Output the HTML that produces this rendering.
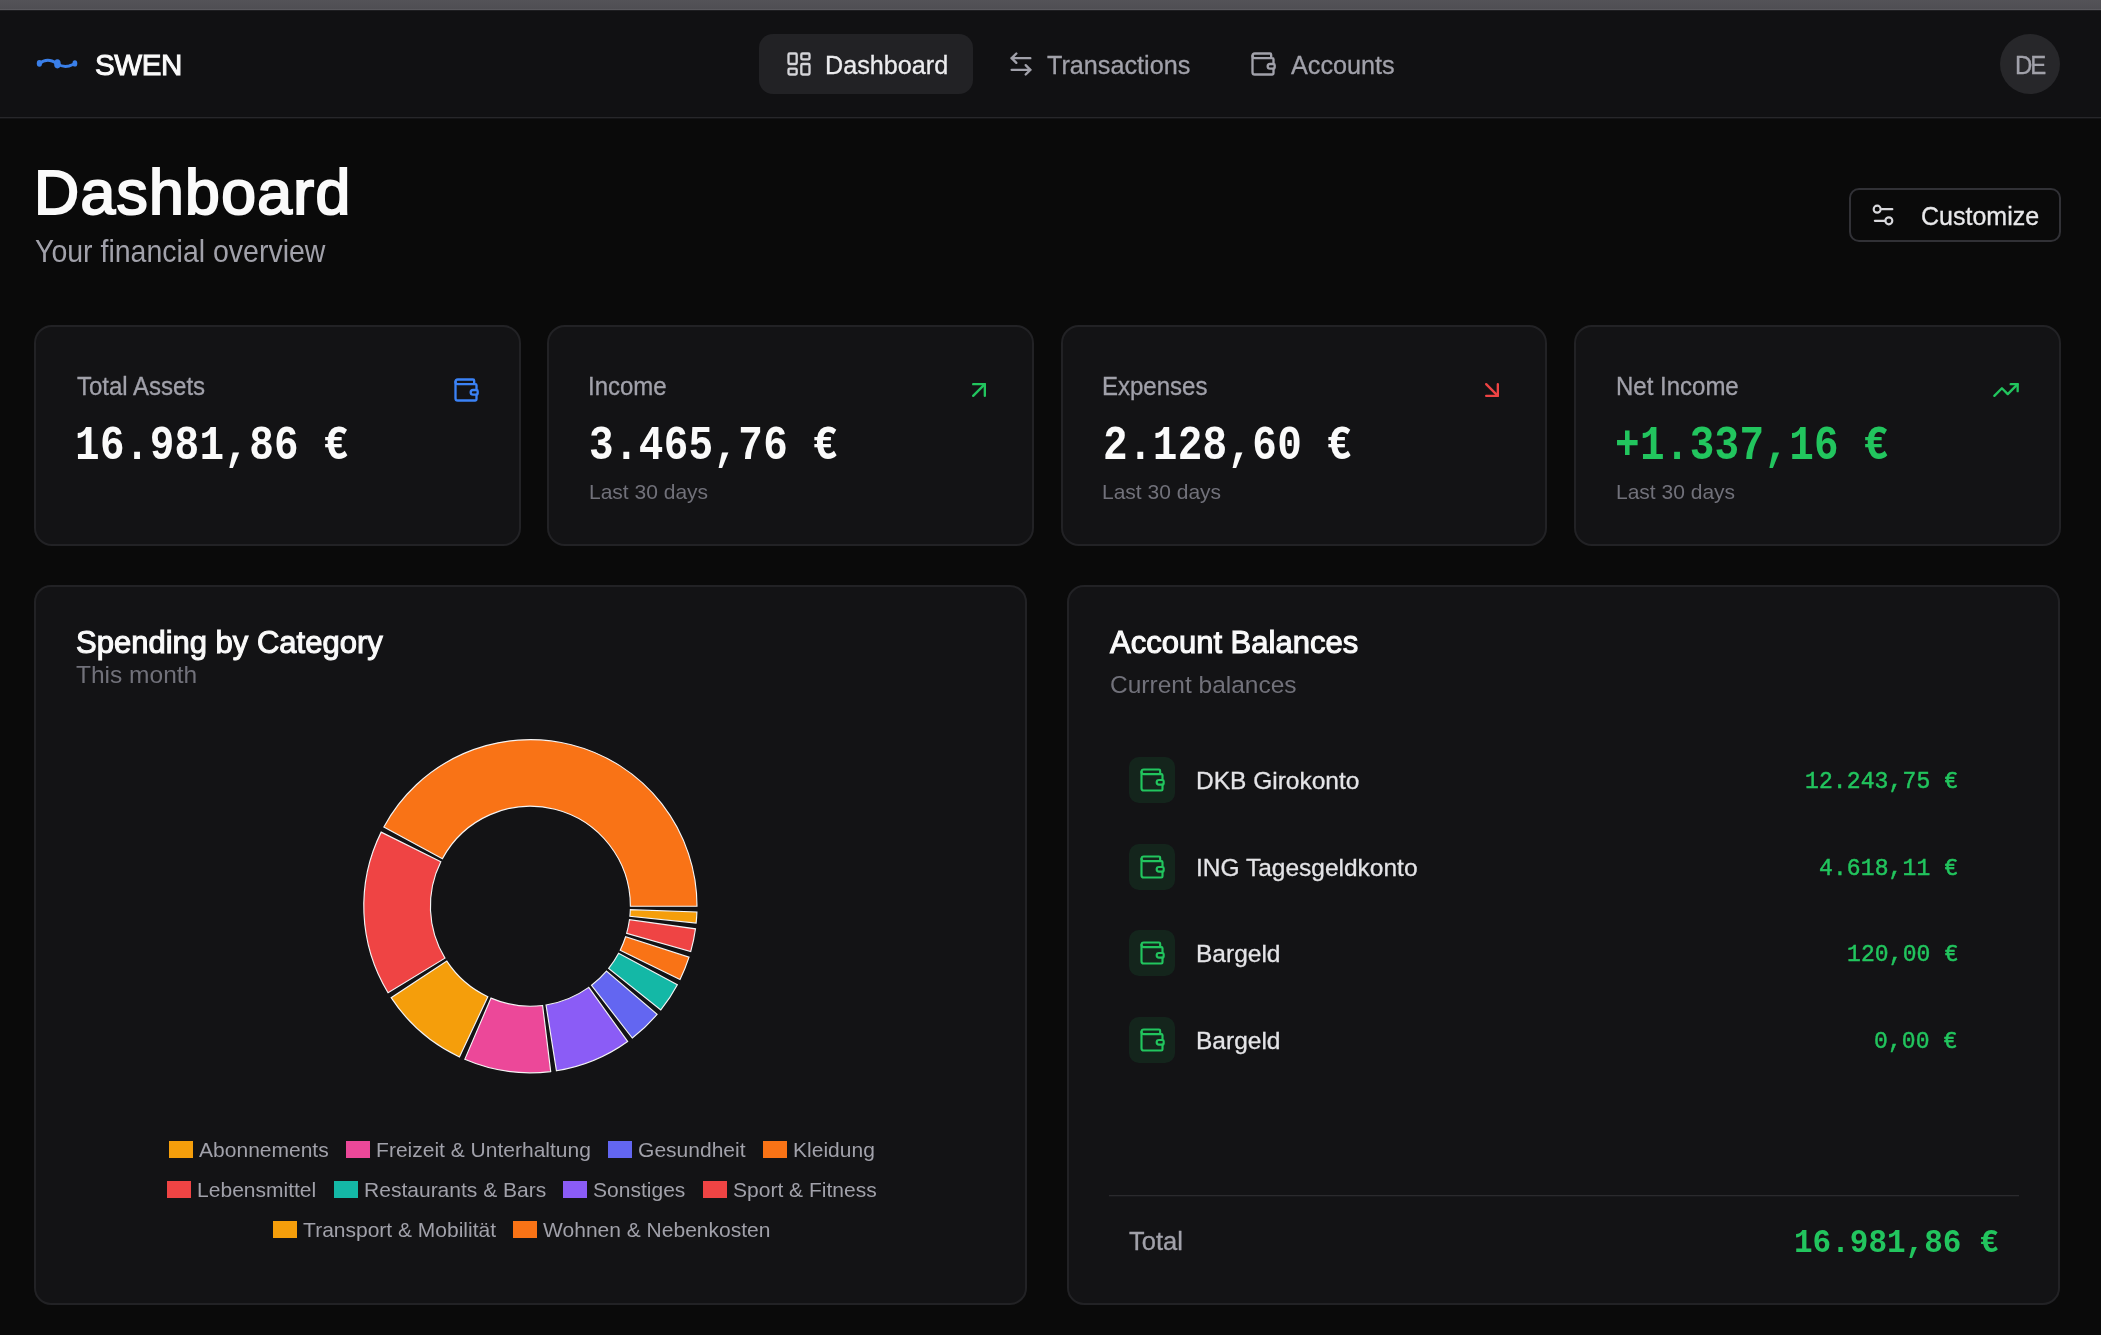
<!DOCTYPE html>
<html><head><meta charset="utf-8"><style>
html,body{margin:0;padding:0;}
body{width:2101px;height:1335px;overflow:hidden;background:#0a0a0a;position:relative;font-family:"Liberation Sans", sans-serif;}
.b{position:absolute;}
.t{position:absolute;white-space:nowrap;will-change:transform;}
.sans{font-family:"Liberation Sans", sans-serif;}
.mono{font-family:"Liberation Mono", monospace;}
.lrow{position:absolute;left:0;width:993px;height:40px;display:flex;justify-content:center;align-items:center;gap:0;}
.li{display:inline-flex;align-items:center;font-size:21px;line-height:21px;color:#a1a1aa;margin:0 17.5px 0 0;white-space:nowrap;will-change:transform;}
.li i{display:inline-block;width:23.6px;height:17px;margin-right:6.5px;}
</style></head><body>
<div class="b" style="left:0px;top:0px;width:2101px;height:9px;background:linear-gradient(#545358,#4f4e53);border-radius:0px;"></div>
<div class="b" style="left:0px;top:9px;width:2101px;height:1px;background:#5b5a5f;border-radius:0px;"></div>
<div class="b" style="left:0px;top:10px;width:2101px;height:107px;background:#111113;border-radius:0px;"></div>
<div class="b" style="left:0px;top:10px;width:2101px;height:1px;background:#1e1e21;border-radius:0px;"></div>
<div class="b" style="left:0px;top:117px;width:2101px;height:1px;background:#27272a;border-radius:0px;"></div>
<div class="b" style="left:0px;top:118px;width:2101px;height:1px;background:#141416;border-radius:0px;"></div>
<svg class="b" style="left:30px;top:50px" width="56" height="28" viewBox="30 50 56 28">
<path d="M39.5 63.6 C43 60.6 47.5 59.6 52 61 C54.5 61.8 56 63 57.5 63.9 C61 66.2 65 67 69 66 C71.5 65.3 73.5 64.4 74.8 63.4" stroke="#3a7fe9" stroke-width="2.9" fill="none" stroke-linecap="round"/>
<ellipse cx="39.4" cy="63.4" rx="2.6" ry="3.3" fill="#3a7fe9"/><ellipse cx="57.4" cy="63.8" rx="3.3" ry="4.6" fill="#3a7fe9"/><ellipse cx="74.9" cy="63.4" rx="2.4" ry="3.2" fill="#3a7fe9"/>
</svg>
<div class="t sans" style="left:94.50px;top:50.33px;font-size:29.5px;line-height:29.5px;color:#fafafa;-webkit-text-stroke:1.00px #fafafa;letter-spacing:-0.4px;">SWEN</div>
<div class="b" style="left:759px;top:33.5px;width:214px;height:60.3px;background:#222225;border-radius:14px;"></div>
<svg class="b" style="left:784.5px;top:49.5px" width="28" height="28" viewBox="0 0 24 24" fill="none" stroke="#d4d4d8" stroke-width="2" stroke-linecap="round" stroke-linejoin="round"><rect width="7" height="9" x="3" y="3" rx="1"/><rect width="7" height="5" x="14" y="3" rx="1"/><rect width="7" height="9" x="14" y="12" rx="1"/><rect width="7" height="5" x="3" y="16" rx="1"/></svg>
<div class="t sans" style="left:824.80px;top:53.07px;font-size:25.2px;line-height:25.2px;color:#ececee;-webkit-text-stroke:0.30px #ececee;">Dashboard</div>
<svg class="b" style="left:1007px;top:49.5px" width="28" height="28" viewBox="0 0 24 24" fill="none" stroke="#a1a1aa" stroke-width="2" stroke-linecap="round" stroke-linejoin="round"><path d="M8 3 4 7l4 4"/><path d="M4 7h16"/><path d="m16 21 4-4-4-4"/><path d="M20 17H4"/></svg>
<div class="t sans" style="left:1047.00px;top:53.07px;font-size:25.2px;line-height:25.2px;color:#a1a1aa;-webkit-text-stroke:0.30px #a1a1aa;">Transactions</div>
<svg class="b" style="left:1249px;top:49.5px" width="28" height="28" viewBox="0 0 24 24" fill="none" stroke="#a1a1aa" stroke-width="2" stroke-linecap="round" stroke-linejoin="round"><path d="M19 7V4a1 1 0 0 0-1-1H5a2 2 0 0 0 0 4h15a1 1 0 0 1 1 1v4h-3a2 2 0 0 0 0 4h3a1 1 0 0 0 1-1v-2a1 1 0 0 0-1-1"/><path d="M3 5v14a2 2 0 0 0 2 2h15a1 1 0 0 0 1-1v-4"/></svg>
<div class="t sans" style="left:1290.50px;top:53.07px;font-size:25.2px;line-height:25.2px;color:#a1a1aa;-webkit-text-stroke:0.30px #a1a1aa;">Accounts</div>
<div class="b" style="left:2000px;top:33.5px;width:60px;height:60px;background:#27272a;border-radius:30px;"></div>
<div class="t sans" style="left:2015.00px;top:53.58px;font-size:24px;line-height:24px;color:#a1a1aa;-webkit-text-stroke:0.29px #a1a1aa;letter-spacing:-2.2px;transform:scaleY(1.05);transform-origin:0 20.32px;">DE</div>
<div class="t sans" style="left:33.50px;top:160.59px;font-size:62.5px;line-height:62.5px;color:#fafafa;-webkit-text-stroke:2.12px #fafafa;letter-spacing:1.3px;">Dashboard</div>
<div class="t sans" style="left:35.00px;top:237.57px;font-size:28.5px;line-height:28.5px;color:#a1a1aa;transform:scaleY(1.08);transform-origin:0 24.13px;">Your financial overview</div>
<div class="b" style="left:1848.5px;top:188px;width:212px;height:54px;background:transparent;border:2px solid #313136;box-sizing:border-box;border-radius:10px;"></div>
<svg class="b" style="left:1869.3px;top:201px" width="28" height="28" viewBox="0 0 24 24" fill="none" stroke="#d9d9dd" stroke-width="1.8" stroke-linecap="round" stroke-linejoin="round"><path d="M20 7h-9"/><path d="M14 17H5"/><circle cx="17" cy="17" r="3"/><circle cx="7" cy="7" r="3"/></svg>
<div class="t sans" style="left:1921.00px;top:203.84px;font-size:25px;line-height:25px;color:#e8e8ea;-webkit-text-stroke:0.30px #e8e8ea;">Customize</div>
<div class="b" style="left:34px;top:325px;width:486.7px;height:220.5px;background:#131315;border:2px solid #222225;box-sizing:border-box;border-radius:18px;"></div>
<div class="t sans" style="left:76.50px;top:374.98px;font-size:24px;line-height:24px;color:#a1a1aa;-webkit-text-stroke:0.29px #a1a1aa;transform:scaleY(1.08);transform-origin:0 20.32px;">Total Assets</div>
<svg class="b" style="left:451.5px;top:376px" width="28" height="28" viewBox="0 0 24 24" fill="none" stroke="#3b82f6" stroke-width="2" stroke-linecap="round" stroke-linejoin="round"><path d="M19 7V4a1 1 0 0 0-1-1H5a2 2 0 0 0 0 4h15a1 1 0 0 1 1 1v4h-3a2 2 0 0 0 0 4h3a1 1 0 0 0 1-1v-2a1 1 0 0 0-1-1"/><path d="M3 5v14a2 2 0 0 0 2 2h15a1 1 0 0 0 1-1v-4"/></svg>
<div class="t mono" style="left:74.50px;top:427.59px;font-size:41px;line-height:41px;color:#fafafa;font-weight:700;letter-spacing:0.28px;transform:scaleY(1.18);transform-origin:0 31.4px;">16.981,86 €</div>
<div class="b" style="left:547.33px;top:325px;width:486.7px;height:220.5px;background:#131315;border:2px solid #222225;box-sizing:border-box;border-radius:18px;"></div>
<div class="t sans" style="left:587.83px;top:374.98px;font-size:24px;line-height:24px;color:#a1a1aa;-webkit-text-stroke:0.29px #a1a1aa;transform:scaleY(1.08);transform-origin:0 20.32px;">Income</div>
<svg class="b" style="left:964.83px;top:376px" width="28" height="28" viewBox="0 0 24 24" fill="none" stroke="#22c55e" stroke-width="2" stroke-linecap="round" stroke-linejoin="round"><path d="M7 7h10v10"/><path d="M7 17 17 7"/></svg>
<div class="t mono" style="left:588.53px;top:427.59px;font-size:41px;line-height:41px;color:#fafafa;font-weight:700;letter-spacing:0.28px;transform:scaleY(1.18);transform-origin:0 31.4px;">3.465,76 €</div>
<div class="t sans" style="left:588.83px;top:480.82px;font-size:21px;line-height:21px;color:#71717a;">Last 30 days</div>
<div class="b" style="left:1060.67px;top:325px;width:486.7px;height:220.5px;background:#131315;border:2px solid #222225;box-sizing:border-box;border-radius:18px;"></div>
<div class="t sans" style="left:1101.87px;top:374.98px;font-size:24px;line-height:24px;color:#a1a1aa;-webkit-text-stroke:0.29px #a1a1aa;transform:scaleY(1.08);transform-origin:0 20.32px;">Expenses</div>
<svg class="b" style="left:1478.17px;top:376px" width="28" height="28" viewBox="0 0 24 24" fill="none" stroke="#ef4444" stroke-width="2" stroke-linecap="round" stroke-linejoin="round"><path d="m7 7 10 10"/><path d="M17 7v10H7"/></svg>
<div class="t mono" style="left:1102.87px;top:427.59px;font-size:41px;line-height:41px;color:#fafafa;font-weight:700;letter-spacing:0.28px;transform:scaleY(1.18);transform-origin:0 31.4px;">2.128,60 €</div>
<div class="t sans" style="left:1102.17px;top:480.82px;font-size:21px;line-height:21px;color:#71717a;">Last 30 days</div>
<div class="b" style="left:1574px;top:325px;width:486.7px;height:220.5px;background:#131315;border:2px solid #222225;box-sizing:border-box;border-radius:18px;"></div>
<div class="t sans" style="left:1615.90px;top:374.98px;font-size:24px;line-height:24px;color:#a1a1aa;-webkit-text-stroke:0.29px #a1a1aa;transform:scaleY(1.08);transform-origin:0 20.32px;">Net Income</div>
<svg class="b" style="left:1991.5px;top:376px" width="28" height="28" viewBox="0 0 24 24" fill="none" stroke="#22c55e" stroke-width="2" stroke-linecap="round" stroke-linejoin="round"><polyline points="22 7 13.5 15.5 8.5 10.5 2 17"/><polyline points="16 7 22 7 22 13"/></svg>
<div class="t mono" style="left:1615.00px;top:427.59px;font-size:41px;line-height:41px;color:#22c55e;font-weight:700;letter-spacing:0.28px;transform:scaleY(1.18);transform-origin:0 31.4px;">+1.337,16 €</div>
<div class="t sans" style="left:1615.50px;top:480.82px;font-size:21px;line-height:21px;color:#71717a;">Last 30 days</div>
<div class="b" style="left:34px;top:585px;width:993px;height:720px;background:#131315;border:2px solid #222225;box-sizing:border-box;border-radius:17px;"></div>
<div class="b" style="left:1067px;top:585px;width:993px;height:720px;background:#131315;border:2px solid #222225;box-sizing:border-box;border-radius:17px;"></div>
<div class="t sans" style="left:75.50px;top:627.26px;font-size:31px;line-height:31px;color:#fafafa;-webkit-text-stroke:1.05px #fafafa;">Spending by Category</div>
<div class="t sans" style="left:76.00px;top:662.96px;font-size:24.5px;line-height:24.5px;color:#71717a;">This month</div>
<div class="t sans" style="left:1109.50px;top:627.26px;font-size:31px;line-height:31px;color:#fafafa;-webkit-text-stroke:1.05px #fafafa;">Account Balances</div>
<div class="t sans" style="left:1109.50px;top:673.26px;font-size:24.5px;line-height:24.5px;color:#71717a;">Current balances</div>
<svg class="b" style="left:0;top:0" width="2101" height="1335"><path d="M697.000,906.200 A166.6,166.6 0 0 0 383.851,826.961 L442.435,858.638 A100.0,100.0 0 0 1 630.400,906.200 Z" fill="#f97316" stroke="#f4f4f5" stroke-width="1.15"/><path d="M381.174,832.124 A166.6,166.6 0 0 0 388.047,992.752 L444.954,958.152 A100.0,100.0 0 0 1 440.829,861.736 Z" fill="#ef4444" stroke="#f4f4f5" stroke-width="1.15"/><path d="M391.154,997.667 A166.6,166.6 0 0 0 459.465,1056.944 L487.822,996.683 A100.0,100.0 0 0 1 446.819,961.102 Z" fill="#f59e0b" stroke="#f4f4f5" stroke-width="1.15"/><path d="M464.769,1059.328 A166.6,166.6 0 0 0 550.703,1071.558 L542.587,1005.455 A100.0,100.0 0 0 1 491.006,998.114 Z" fill="#ec4899" stroke="#f4f4f5" stroke-width="1.15"/><path d="M556.462,1070.749 A166.6,166.6 0 0 0 627.618,1041.493 L588.754,987.408 A100.0,100.0 0 0 1 546.043,1004.969 Z" fill="#8b5cf6" stroke="#f4f4f5" stroke-width="1.15"/><path d="M632.280,1038.018 A166.6,166.6 0 0 0 657.084,1014.398 L606.441,971.145 A100.0,100.0 0 0 1 591.553,985.322 Z" fill="#6366f1" stroke="#f4f4f5" stroke-width="1.15"/><path d="M660.783,1009.911 A166.6,166.6 0 0 0 677.362,984.671 L618.613,953.301 A100.0,100.0 0 0 1 608.661,968.451 Z" fill="#14b8a6" stroke="#f4f4f5" stroke-width="1.15"/><path d="M680.011,979.494 A166.6,166.6 0 0 0 689.025,957.129 L625.613,936.770 A100.0,100.0 0 0 1 620.203,950.194 Z" fill="#f97316" stroke="#f4f4f5" stroke-width="1.15"/><path d="M690.706,951.562 A166.6,166.6 0 0 0 695.459,928.810 L629.475,919.772 A100.0,100.0 0 0 1 626.622,933.428 Z" fill="#ef4444" stroke="#f4f4f5" stroke-width="1.15"/><path d="M696.147,923.036 A166.6,166.6 0 0 0 696.899,912.014 L630.339,909.690 A100.0,100.0 0 0 1 629.888,916.306 Z" fill="#f59e0b" stroke="#f4f4f5" stroke-width="1.15"/></svg>
<div class="b" style="left:34px;top:1120px;width:993px;"><div class="lrow" style="top:9.700000000000045px"><span class="li"><i style="background:#f59e0b"></i>Abonnements</span><span class="li"><i style="background:#ec4899"></i>Freizeit &amp; Unterhaltung</span><span class="li"><i style="background:#6366f1"></i>Gesundheit</span><span class="li"><i style="background:#f97316"></i>Kleidung</span></div><div class="lrow" style="top:49.700000000000045px"><span class="li"><i style="background:#ef4444"></i>Lebensmittel</span><span class="li"><i style="background:#14b8a6"></i>Restaurants &amp; Bars</span><span class="li"><i style="background:#8b5cf6"></i>Sonstiges</span><span class="li"><i style="background:#ef4444"></i>Sport &amp; Fitness</span></div><div class="lrow" style="top:89.70000000000005px"><span class="li"><i style="background:#f59e0b"></i>Transport &amp; Mobilität</span><span class="li"><i style="background:#f97316"></i>Wohnen &amp; Nebenkosten</span></div></div>
<div class="b" style="left:1129px;top:757.0px;width:46px;height:46px;background:rgba(34,197,94,0.10);border-radius:10px;"></div>
<svg class="b" style="left:1138px;top:766.0px" width="28" height="28" viewBox="0 0 24 24" fill="none" stroke="#22c55e" stroke-width="1.85" stroke-linecap="round" stroke-linejoin="round"><path d="M19 7V4a1 1 0 0 0-1-1H5a2 2 0 0 0 0 4h15a1 1 0 0 1 1 1v4h-3a2 2 0 0 0 0 4h3a1 1 0 0 0 1-1v-2a1 1 0 0 0-1-1"/><path d="M3 5v14a2 2 0 0 0 2 2h15a1 1 0 0 0 1-1v-4"/></svg>
<div class="t sans" style="left:1195.50px;top:769.26px;font-size:24.5px;line-height:24.5px;color:#e4e4e7;-webkit-text-stroke:0.29px #e4e4e7;">DKB Girokonto</div>
<div class="t mono" style="right:143.00px;top:771.38px;font-size:23px;line-height:23px;color:#22c55e;-webkit-text-stroke:0.28px #22c55e;letter-spacing:0.12px;-webkit-text-stroke:0.45px #22c55e;">12.243,75 €</div>
<div class="b" style="left:1129px;top:843.5px;width:46px;height:46px;background:rgba(34,197,94,0.10);border-radius:10px;"></div>
<svg class="b" style="left:1138px;top:852.5px" width="28" height="28" viewBox="0 0 24 24" fill="none" stroke="#22c55e" stroke-width="1.85" stroke-linecap="round" stroke-linejoin="round"><path d="M19 7V4a1 1 0 0 0-1-1H5a2 2 0 0 0 0 4h15a1 1 0 0 1 1 1v4h-3a2 2 0 0 0 0 4h3a1 1 0 0 0 1-1v-2a1 1 0 0 0-1-1"/><path d="M3 5v14a2 2 0 0 0 2 2h15a1 1 0 0 0 1-1v-4"/></svg>
<div class="t sans" style="left:1195.50px;top:855.76px;font-size:24.5px;line-height:24.5px;color:#e4e4e7;-webkit-text-stroke:0.29px #e4e4e7;">ING Tagesgeldkonto</div>
<div class="t mono" style="right:143.00px;top:857.88px;font-size:23px;line-height:23px;color:#22c55e;-webkit-text-stroke:0.28px #22c55e;letter-spacing:0.12px;-webkit-text-stroke:0.45px #22c55e;">4.618,11 €</div>
<div class="b" style="left:1129px;top:930.0px;width:46px;height:46px;background:rgba(34,197,94,0.10);border-radius:10px;"></div>
<svg class="b" style="left:1138px;top:939.0px" width="28" height="28" viewBox="0 0 24 24" fill="none" stroke="#22c55e" stroke-width="1.85" stroke-linecap="round" stroke-linejoin="round"><path d="M19 7V4a1 1 0 0 0-1-1H5a2 2 0 0 0 0 4h15a1 1 0 0 1 1 1v4h-3a2 2 0 0 0 0 4h3a1 1 0 0 0 1-1v-2a1 1 0 0 0-1-1"/><path d="M3 5v14a2 2 0 0 0 2 2h15a1 1 0 0 0 1-1v-4"/></svg>
<div class="t sans" style="left:1195.50px;top:942.26px;font-size:24.5px;line-height:24.5px;color:#e4e4e7;-webkit-text-stroke:0.29px #e4e4e7;">Bargeld</div>
<div class="t mono" style="right:143.00px;top:944.38px;font-size:23px;line-height:23px;color:#22c55e;-webkit-text-stroke:0.28px #22c55e;letter-spacing:0.12px;-webkit-text-stroke:0.45px #22c55e;">120,00 €</div>
<div class="b" style="left:1129px;top:1016.5px;width:46px;height:46px;background:rgba(34,197,94,0.10);border-radius:10px;"></div>
<svg class="b" style="left:1138px;top:1025.5px" width="28" height="28" viewBox="0 0 24 24" fill="none" stroke="#22c55e" stroke-width="1.85" stroke-linecap="round" stroke-linejoin="round"><path d="M19 7V4a1 1 0 0 0-1-1H5a2 2 0 0 0 0 4h15a1 1 0 0 1 1 1v4h-3a2 2 0 0 0 0 4h3a1 1 0 0 0 1-1v-2a1 1 0 0 0-1-1"/><path d="M3 5v14a2 2 0 0 0 2 2h15a1 1 0 0 0 1-1v-4"/></svg>
<div class="t sans" style="left:1195.50px;top:1028.76px;font-size:24.5px;line-height:24.5px;color:#e4e4e7;-webkit-text-stroke:0.29px #e4e4e7;">Bargeld</div>
<div class="t mono" style="right:143.00px;top:1030.88px;font-size:23px;line-height:23px;color:#22c55e;-webkit-text-stroke:0.28px #22c55e;letter-spacing:0.12px;-webkit-text-stroke:0.45px #22c55e;">0,00 €</div>
<div class="b" style="left:1109px;top:1195px;width:910px;height:1px;background:#2a2a2d;border-radius:0px;"></div>
<div class="b" style="left:1109px;top:1196px;width:910px;height:1px;background:#19191c;border-radius:0px;"></div>
<div class="t sans" style="left:1129.00px;top:1228.91px;font-size:25.5px;line-height:25.5px;color:#a1a1aa;-webkit-text-stroke:0.31px #a1a1aa;">Total</div>
<div class="t mono" style="right:102.50px;top:1228.25px;font-size:31px;line-height:31px;color:#22c55e;font-weight:700;transform:scaleY(1.1);transform-origin:0 23.75px;">16.981,86 €</div>

</body></html>
